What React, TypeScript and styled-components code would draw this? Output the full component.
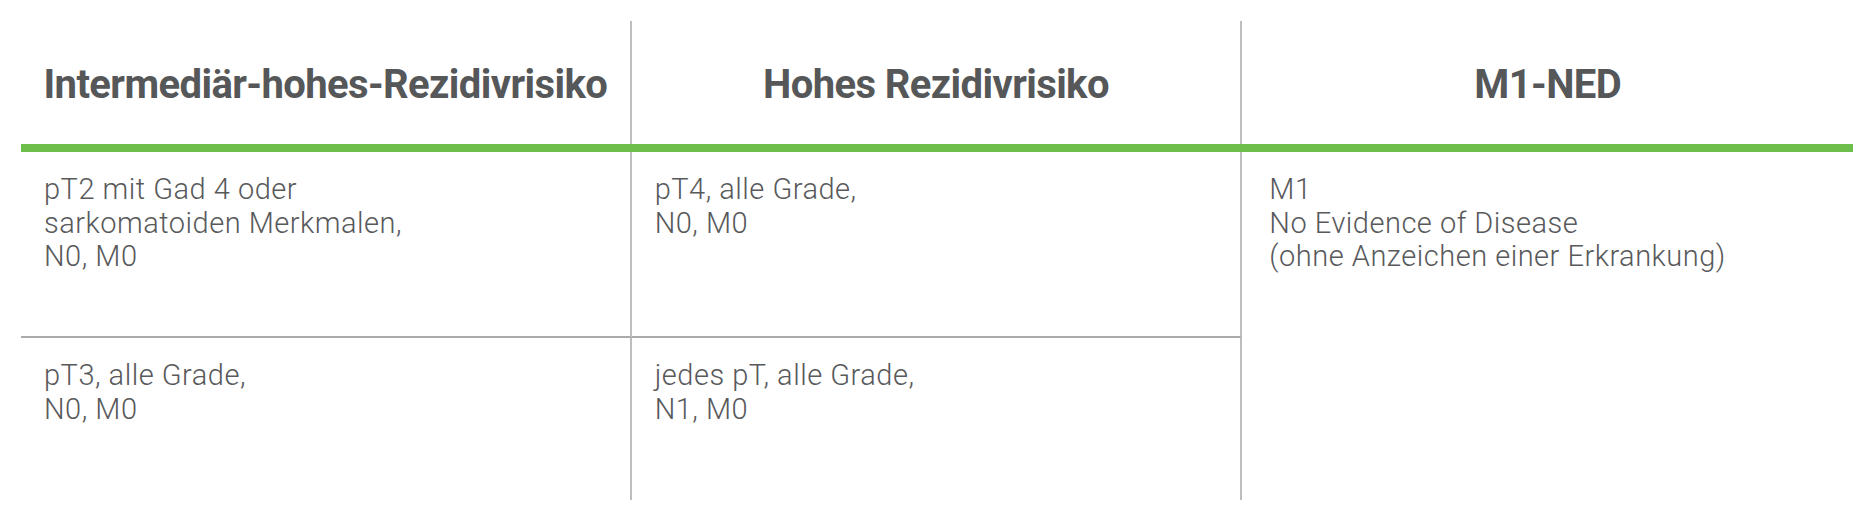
import React from 'react';
import styled, { createGlobalStyle } from 'styled-components';

const GlobalStyle = createGlobalStyle`
  html, body {
    margin: 0;
    padding: 0;
    background: #ffffff;
  }
  body {
    font-family: Roboto, 'Liberation Sans', Arial, sans-serif;
    color: #58595b;
  }
`;

const Page = styled.div`
  padding: 21px 22px 21px 21px;
  width: 1832px;
`;

const HeaderRow = styled.div`
  display: grid;
  grid-template-columns: repeat(3, 1fr);
  height: 123px;
`;

const HeadCell = styled.div<{ $last?: boolean }>`
  display: flex;
  align-items: center;
  justify-content: center;
  box-sizing: border-box;
  border-right: ${({ $last }) => ($last ? 'none' : '2px solid #bdbdbd')};
  font-size: 40px;
  font-weight: 700;
  color: #555759;
  letter-spacing: -0.6px;
  padding-top: 4px;
`;

const GreenRule = styled.div`
  height: 8px;
  background-color: #6cbf4b;
`;

const Body = styled.div`
  display: grid;
  grid-template-columns: repeat(3, 1fr);
  grid-template-rows: 186px 162px;
`;

const Cell = styled.div<{ $divider?: boolean; $underline?: boolean; $span?: number }>`
  box-sizing: border-box;
  padding: 21px 24px 0 ${({ $span }) => ($span ? '27px' : '23px')};
  border-right: ${({ $divider }) => ($divider ? '2px solid #bdbdbd' : 'none')};
  border-bottom: ${({ $underline }) => ($underline ? '2px solid #aaaaaa' : 'none')};
  grid-row: ${({ $span }) => ($span ? `span ${$span}` : 'auto')};
  font-size: 29px;
  font-weight: 300;
  letter-spacing: 0.5px;
  line-height: 33.5px;
  color: #58595b;
`;

const Line = styled.div`
  white-space: nowrap;
`;

type Column = {
  title: string;
};

const columns: Column[] = [
  { title: 'Intermediär-hohes-Rezidivrisiko' },
  { title: 'Hohes Rezidivrisiko' },
  { title: 'M1-NED' },
];

const CellText: React.FC<{ lines: string[] }> = ({ lines }) => (
  <>
    {lines.map((l) => (
      <Line key={l}>{l}</Line>
    ))}
  </>
);

export default function App() {
  return (
    <>
      <GlobalStyle />
      <Page>
        <HeaderRow>
          {columns.map((c, i) => (
            <HeadCell key={c.title} $last={i === columns.length - 1}>
              {c.title}
            </HeadCell>
          ))}
        </HeaderRow>
        <GreenRule />
        <Body>
          <Cell $divider $underline>
            <CellText lines={['pT2 mit Gad 4 oder', 'sarkomatoiden Merkmalen,', 'N0, M0']} />
          </Cell>
          <Cell $divider $underline>
            <CellText lines={['pT4, alle Grade,', 'N0, M0']} />
          </Cell>
          <Cell $span={2}>
            <CellText
              lines={['M1', 'No Evidence of Disease', '(ohne Anzeichen einer Erkrankung)']}
            />
          </Cell>
          <Cell $divider>
            <CellText lines={['pT3, alle Grade,', 'N0, M0']} />
          </Cell>
          <Cell $divider>
            <CellText lines={['jedes pT, alle Grade,', 'N1, M0']} />
          </Cell>
        </Body>
      </Page>
    </>
  );
}
